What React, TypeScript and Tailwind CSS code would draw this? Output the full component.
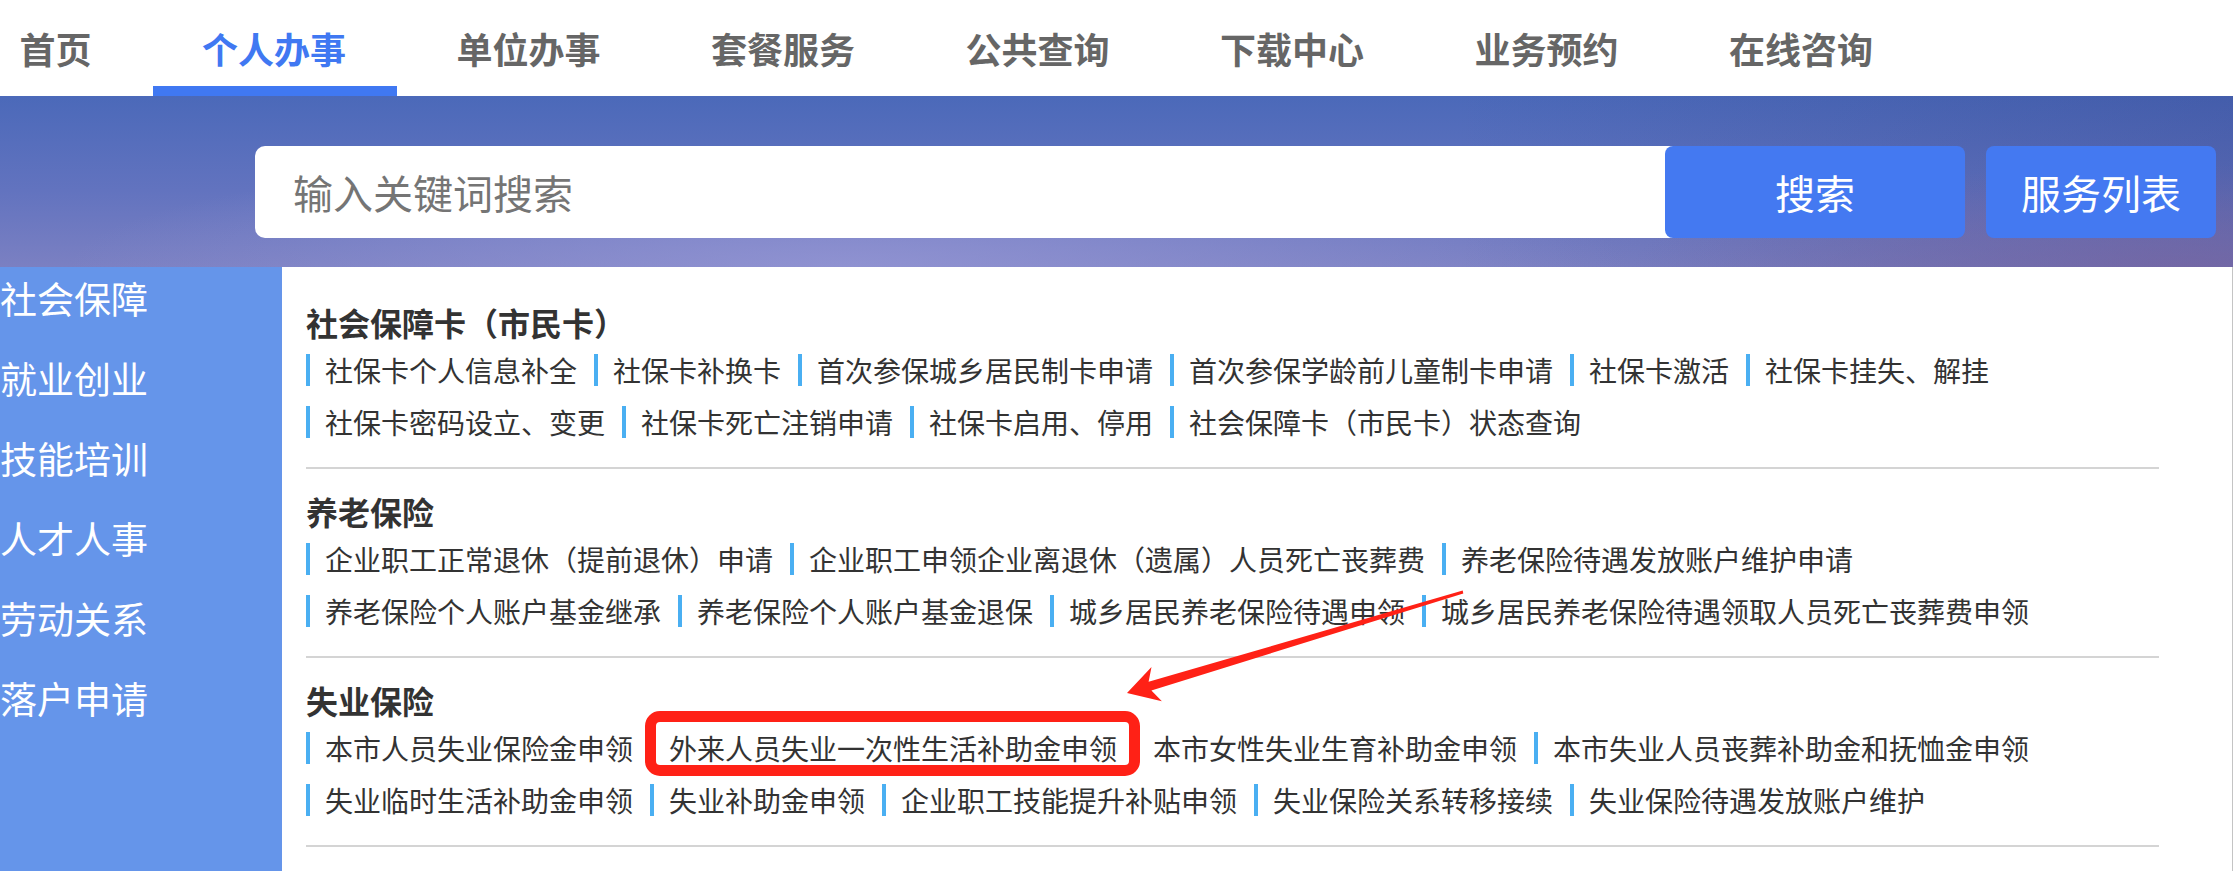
import React from "react";

const navItems = ["首页", "个人办事", "单位办事", "套餐服务", "公共查询", "下载中心", "业务预约", "在线咨询"];
const sideItems = ["社会保障", "就业创业", "技能培训", "人才人事", "劳动关系", "落户申请"];

const sections: { title: string; links: string[] }[] = [
  {
    title: "社会保障卡（市民卡）",
    links: [
      "社保卡个人信息补全",
      "社保卡补换卡",
      "首次参保城乡居民制卡申请",
      "首次参保学龄前儿童制卡申请",
      "社保卡激活",
      "社保卡挂失、解挂",
      "社保卡密码设立、变更",
      "社保卡死亡注销申请",
      "社保卡启用、停用",
      "社会保障卡（市民卡）状态查询",
    ],
  },
  {
    title: "养老保险",
    links: [
      "企业职工正常退休（提前退休）申请",
      "企业职工申领企业离退休（遗属）人员死亡丧葬费",
      "养老保险待遇发放账户维护申请",
      "养老保险个人账户基金继承",
      "养老保险个人账户基金退保",
      "城乡居民养老保险待遇申领",
      "城乡居民养老保险待遇领取人员死亡丧葬费申领",
    ],
  },
  {
    title: "失业保险",
    links: [
      "本市人员失业保险金申领",
      "外来人员失业一次性生活补助金申领",
      "本市女性失业生育补助金申领",
      "本市失业人员丧葬补助金和抚恤金申领",
      "失业临时生活补助金申领",
      "失业补助金申领",
      "企业职工技能提升补贴申领",
      "失业保险关系转移接续",
      "失业保险待遇发放账户维护",
    ],
  },
];

function Arrow() {
  // tapered annotation arrow, page coordinates
  const pts = "1462.7,590.6 1148.6,681.8 1151.5,666.9 1127,693 1161.9,701.3 1151.4,690.4 1463.3,593.4";
  return (
    <svg
      className="pointer-events-none absolute left-0 top-0 z-20"
      width="2233"
      height="871"
      viewBox="0 0 2233 871"
    >
      <polygon points={pts} fill="#ff2116" />
    </svg>
  );
}

export default function App() {
  return (
    <div className="relative h-[871px] w-full overflow-hidden bg-white font-['Noto_Sans_CJK_SC','Noto_Sans',sans-serif]">
      {/* top nav */}
      <div className="flex h-[96px] items-stretch gap-[110.5px] pl-[19.5px]">
        {navItems.map((n, i) => (
          <div
            key={n}
            className={
              i === 1
                ? "relative flex items-center text-[36px] font-bold text-[#4078f2]"
                : "relative flex items-center text-[36px] font-bold text-[#666666]"
            }
          >
            {n}
            {i === 1 && <span className="absolute bottom-0 -left-[49px] -right-[51px] h-[10px] bg-[#4078f2]" />}
          </div>
        ))}
      </div>

      {/* banner */}
      <div className="h-[171px] bg-[radial-gradient(ellipse_35%_70%_at_38%_100%,rgba(150,152,214,0.75),transparent),radial-gradient(ellipse_25%_60%_at_98%_100%,rgba(118,100,160,0.7),transparent),linear-gradient(90deg,rgba(0,0,0,0)_0%,rgba(0,0,0,0)_65%,rgba(40,50,120,0.22)_100%),linear-gradient(180deg,#4b69b9_0%,#6273bf_55%,#7b80c2_100%)] pt-[50px] pl-[255px] pr-[17px]">
        <div className="flex h-[92px] gap-[21px]">
          <div className="flex flex-1">
            <div className="-mr-[10px] flex flex-1 items-center rounded-l-[10px] bg-white pl-[38px] pr-[10px] text-[40px] text-[#757575]">
              输入关键词搜索
            </div>
            <div className="relative z-10 flex w-[300px] items-center justify-center rounded-[8px] bg-[#4479f1] text-[40px] text-white">
              搜索
            </div>
          </div>
          <div className="flex w-[230px] items-center justify-center rounded-[8px] bg-[#4479f1] text-[40px] text-white">
            服务列表
          </div>
        </div>
      </div>

      {/* body */}
      <div className="flex h-[604px]">
        <div className="flex w-[282px] flex-col gap-[24px] bg-[#6595ea] pt-[3px]">
          {sideItems.map((s) => (
            <div key={s} className="text-[37px] leading-[56px] text-white">
              {s}
            </div>
          ))}
        </div>
        <div className="flex-1 border-r border-[#c4c4c4] pl-[24px] pr-[73px] pt-[12.5px]">
          {sections.map((sec) => (
            <div key={sec.title} className="border-b-2 border-[#d4d4d4] pt-[22px] pb-[29px]">
              <div className="mb-[12px] text-[32px] font-bold leading-[40px] text-[#333333]">{sec.title}</div>
              <div className="flex flex-wrap gap-x-[17px] gap-y-[20px]">
                {sec.links.map((l) => (
                  <div
                    key={l}
                    className="relative border-l-4 border-[#4aaff2] pl-[15px] text-[28px] leading-[32px] text-[#333333]"
                  >
                    {l}
                    {l === "外来人员失业一次性生活补助金申领" && (
                      <span className="pointer-events-none absolute z-10 -left-[9px] -right-[23px] -top-[21px] -bottom-[12px] rounded-[15px] border-[11px] border-[#ff2116]" />
                    )}
                  </div>
                ))}
              </div>
            </div>
          ))}
        </div>
      </div>

      <Arrow />
    </div>
  );
}
